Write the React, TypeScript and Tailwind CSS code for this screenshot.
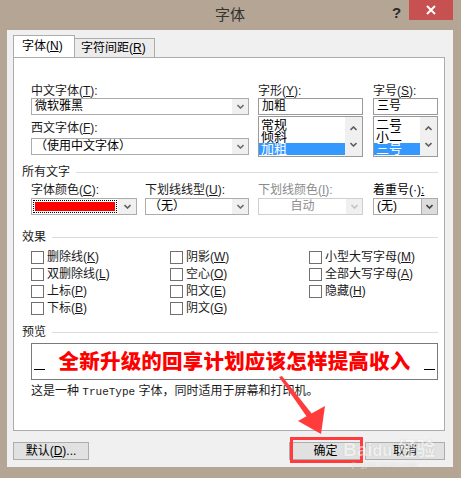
const font = "font-['Liberation_Sans','Noto_Sans_CJK_SC',sans-serif]";

function Chevron({ up = false, color = "#606060" }: { up?: boolean; color?: string }) {
  return (
    <svg width="7" height="5" viewBox="0 0 7 5">
      <polyline
        points={up ? "0.5,4 3.5,1 6.5,4" : "0.5,1 3.5,4 6.5,1"}
        fill="none"
        stroke={color}
        strokeWidth="1.6"
      />
    </svg>
  );
}

function Key({ k }: { k: string }) {
  return (
    <>
      (<span className="underline underline-offset-1">{k}</span>)
    </>
  );
}

function Label({ text, k, tail = ":", gray = false }: { text: string; k: string; tail?: string; gray?: boolean }) {
  return (
    <div className={`h-[13px] leading-[13px] text-[12px] whitespace-nowrap ${gray ? "text-[#8a8a8a]" : "text-[#1a1a1a]"}`}>
      {text}
      <Key k={k} />
      {tail}
    </div>
  );
}

function Select({ value, w, disabled = false, center = false, dark = false }: { value: string; w: string; disabled?: boolean; center?: boolean; dark?: boolean }) {
  return (
    <div className={`${w} h-[17px] flex border ${disabled ? "border-[#cfcfcf]" : "border-[#acacac]"} bg-white`}>
      <div
        className={`flex-1 px-[3px] text-[12px] leading-[15px] whitespace-nowrap overflow-hidden ${
          disabled ? "text-[#8d8d8d] text-center" : "text-black"
        } ${center ? "text-center" : ""}`}
      >
        {value}
      </div>
      <div
        className={`w-[16px] flex items-center justify-center ${
          dark ? "bg-[#dcdcdc] border-l border-[#acacac]" : "bg-[#f0f0f0]"
        }`}
      >
        <Chevron color={disabled ? "#c4c4c4" : dark ? "#404040" : "#707070"} />
      </div>
    </div>
  );
}

function ListBox({ items, w }: { items: string[]; w: string }) {
  return (
    <div className={`${w} h-[41px] mt-[1px] border border-[#9a9a9a] bg-white flex overflow-hidden`}>
      <div className="flex-1 flex flex-col justify-end pb-[1px] overflow-hidden">
        {items.map((it, i) => (
          <div
            key={it}
            className={`h-[12px] leading-[12px] text-[13px] pl-[2px] whitespace-nowrap overflow-hidden ${
              i === items.length - 1 ? "bg-[#3399ff] text-white" : "text-black"
            }`}
          >
            {it}
          </div>
        ))}
      </div>
      <div className="w-[17px] bg-[#f0f0f0] flex flex-col items-center justify-around py-[3px]">
        <Chevron up />
        <Chevron />
      </div>
    </div>
  );
}

function Section({ title }: { title: string }) {
  return (
    <div className="h-[12px] flex items-center gap-[6px]">
      <span className="text-[12px] leading-[12px] text-[#1a1a1a]">{title}</span>
      <div className="flex-1 h-px bg-[#dcdcdc]" />
    </div>
  );
}

function Check({ text, k }: { text: string; k: string }) {
  return (
    <div className="w-[139px] shrink-0 h-[17px] flex items-center gap-[3px]">
      <div className="w-[13px] h-[13px] border border-[#707070] bg-white" />
      <span className="text-[12px] leading-[13px] text-[#1a1a1a] whitespace-nowrap">
        {text}
        <Key k={k} />
      </span>
    </div>
  );
}

function Button({ children, w }: { children: React.ReactNode; w: string }) {
  return (
    <div className={`${w} h-[18px] border border-[#adadad] bg-[#e1e1e1] flex items-center justify-center text-[12px] text-black`}>
      {children}
    </div>
  );
}

export default function App() {
  return (
    <div className={`${font} relative w-[461px] h-[478px] bg-[#b5a594] flex flex-col overflow-hidden`}>
      {/* title bar */}
      <div className="h-[30px] flex items-start">
        <div className="flex-1 pl-[68px] pt-[6px] text-center text-[15px] leading-[17px] text-[#333]">字体</div>
        <div className="pt-[5px] w-[17px] text-[15px] font-bold text-[#2a2a2a] leading-[16px]">?</div>
        <div className="mr-[8px] w-[44px] h-[20px] bg-[#c75050] flex items-center justify-center">
          <svg width="10" height="10" viewBox="0 0 10 10">
            <path d="M1 1L9 9M9 1L1 9" stroke="white" strokeWidth="2" />
          </svg>
        </div>
      </div>

      {/* client */}
      <div className="mx-[8px] ml-[7px] h-[437px] bg-[#f0f0f0] pl-[6px] pr-[8px] pt-[6px]">
        {/* tabs */}
        <div className="h-[21px] flex items-end relative z-10">
          <div className="w-[62px] h-[22px] border border-b-0 border-[#acacac] bg-white text-[12px] leading-[20px] pl-[8px] text-black">
            字体<Key k="N" />
          </div>
          <div className="w-[81px] h-[19px] -ml-px border border-b-0 border-[#acacac] bg-[#ececec] text-[12px] leading-[18px] pl-[6px] text-black">
            字符间距<Key k="R" />
          </div>
        </div>

        {/* panel */}
        <div className="h-[374px] border border-[#acacac] bg-white pl-[8px] pr-[6px] pt-[27px]">
          <div className="flex pl-[9px]">
            <div className="w-[218px] flex flex-col">
              <Label text="中文字体" k="T" />
              <Select value="微软雅黑" w="w-[218px]" />
              <div className="mt-[7px]">
                <Label text="西文字体" k="F" />
              </div>
              <div className="mt-[3px]">
                <Select value="（使用中文字体）" w="w-[218px]" />
              </div>
            </div>
            <div className="ml-[9px] w-[105px] flex flex-col">
              <Label text="字形" k="Y" />
              <div className="h-[17px] border border-[#9a9a9a] text-[12px] leading-[15px] px-[3px]">加粗</div>
              <ListBox items={["常规", "倾斜", "加粗"]} w="w-[105px]" />
            </div>
            <div className="ml-[10px] w-[65px] flex flex-col">
              <Label text="字号" k="S" />
              <div className="h-[17px] border border-[#9a9a9a] text-[12px] leading-[15px] px-[3px]">三号</div>
              <ListBox items={["二号", "小二", "三号"]} w="w-[65px]" />
            </div>
          </div>

          <div className="mt-[9px]">
            <Section title="所有文字" />
          </div>
          <div className="mt-[6px] flex pl-[9px]">
            <div className="w-[106px]">
              <Label text="字体颜色" k="C" />
              <div className="mt-px w-[106px] h-[17px] flex border border-[#acacac] bg-white">
                <div className="flex-1 p-px">
                  <div className="h-full border border-dotted border-black p-px">
                    <div className="h-full bg-[#ff0000]" />
                  </div>
                </div>
                <div className="w-[18px] bg-[#f0f0f0] flex items-center justify-center">
                  <Chevron />
                </div>
              </div>
            </div>
            <div className="ml-[8px] w-[104px]">
              <Label text="下划线线型" k="U" />
              <div className="mt-px">
                <Select value="（无）" w="w-[104px]" />
              </div>
            </div>
            <div className="ml-[9px] w-[105px]">
              <Label text="下划线颜色" k="I" gray />
              <div className="mt-px">
                <Select value="自动" w="w-[105px]" disabled />
              </div>
            </div>
            <div className="ml-[10px] w-[65px]">
              <div className="h-[13px] leading-[13px] text-[12px] whitespace-nowrap text-black">
                着重号(·)<span className="underline">:</span>
              </div>
              <div className="mt-px">
                <Select value="(无)" w="w-[65px]" dark />
              </div>
            </div>
          </div>

          <div className="mt-[16px]">
            <Section title="效果" />
          </div>
          <div className="mt-[6px] pl-[9px] flex flex-col">
            <div className="flex">
              <Check text="删除线" k="K" />
              <Check text="阴影" k="W" />
              <Check text="小型大写字母" k="M" />
            </div>
            <div className="flex">
              <Check text="双删除线" k="L" />
              <Check text="空心" k="O" />
              <Check text="全部大写字母" k="A" />
            </div>
            <div className="flex">
              <Check text="上标" k="P" />
              <Check text="阳文" k="E" />
              <Check text="隐藏" k="H" />
            </div>
            <div className="flex">
              <Check text="下标" k="B" />
              <Check text="阴文" k="G" />
            </div>
          </div>

          <div className="mt-[9px]">
            <Section title="预览" />
          </div>
          <div className="mt-[5px] ml-[9px] h-[37px] border border-[#7a7a7a] flex items-center px-[2px]">
            <div className="w-[11px] h-[12px] border-b border-black self-end mb-[9px]" />
            <div className="flex-1 text-center text-[20.5px] leading-[24px] font-black text-[#ff0000] tracking-[0.2px]">
              全新升级的回享计划应该怎样提高收入
            </div>
            <div className="w-[11px] h-[12px] border-b border-black self-end mb-[9px]" />
          </div>
          <div className="mt-[5px] ml-[9px] text-[12px] leading-[13px] text-[#1a1a1a] whitespace-nowrap">
            这是一种 <span className="font-['Liberation_Mono',monospace] text-[11px]">TrueType</span> 字体，同时适用于屏幕和打印机。
          </div>
        </div>

        {/* buttons */}
        <div className="mt-[11px] flex items-center">
          <Button w="w-[76px]">
            默认<Key k="D" />...
          </Button>
          <div className="flex-1" />
          <Button w="w-[73px]">确定</Button>
          <div className="w-[3px]" />
          <Button w="w-[80px]">取消</Button>
        </div>
      </div>

      {/* annotation overlay */}
      <div className="absolute left-[290px] top-[437px] w-[73px] h-[26px] border-[3px] border-[#ff3b3b]" />
      <svg className="absolute left-0 top-0 pointer-events-none" width="461" height="478">
        <polygon points="279,377 282,376 312,414 307,417" fill="#ff3b3b" />
        <polygon points="298,421 325,406 321,434" fill="#ff3b3b" />
      </svg>
      <div className="absolute left-[343px] top-[436px] text-[19px] font-bold text-white opacity-50 [text-shadow:0_0_1px_#999] pointer-events-none">
        Bai<span className="text-[16px]">du</span> 经验
      </div>
      <div className="absolute left-[352px] top-[459px] text-[8px] text-white opacity-50 [text-shadow:0_0_1px_#999] pointer-events-none">
        jingyan.baidu.com
      </div>
    </div>
  );
}
